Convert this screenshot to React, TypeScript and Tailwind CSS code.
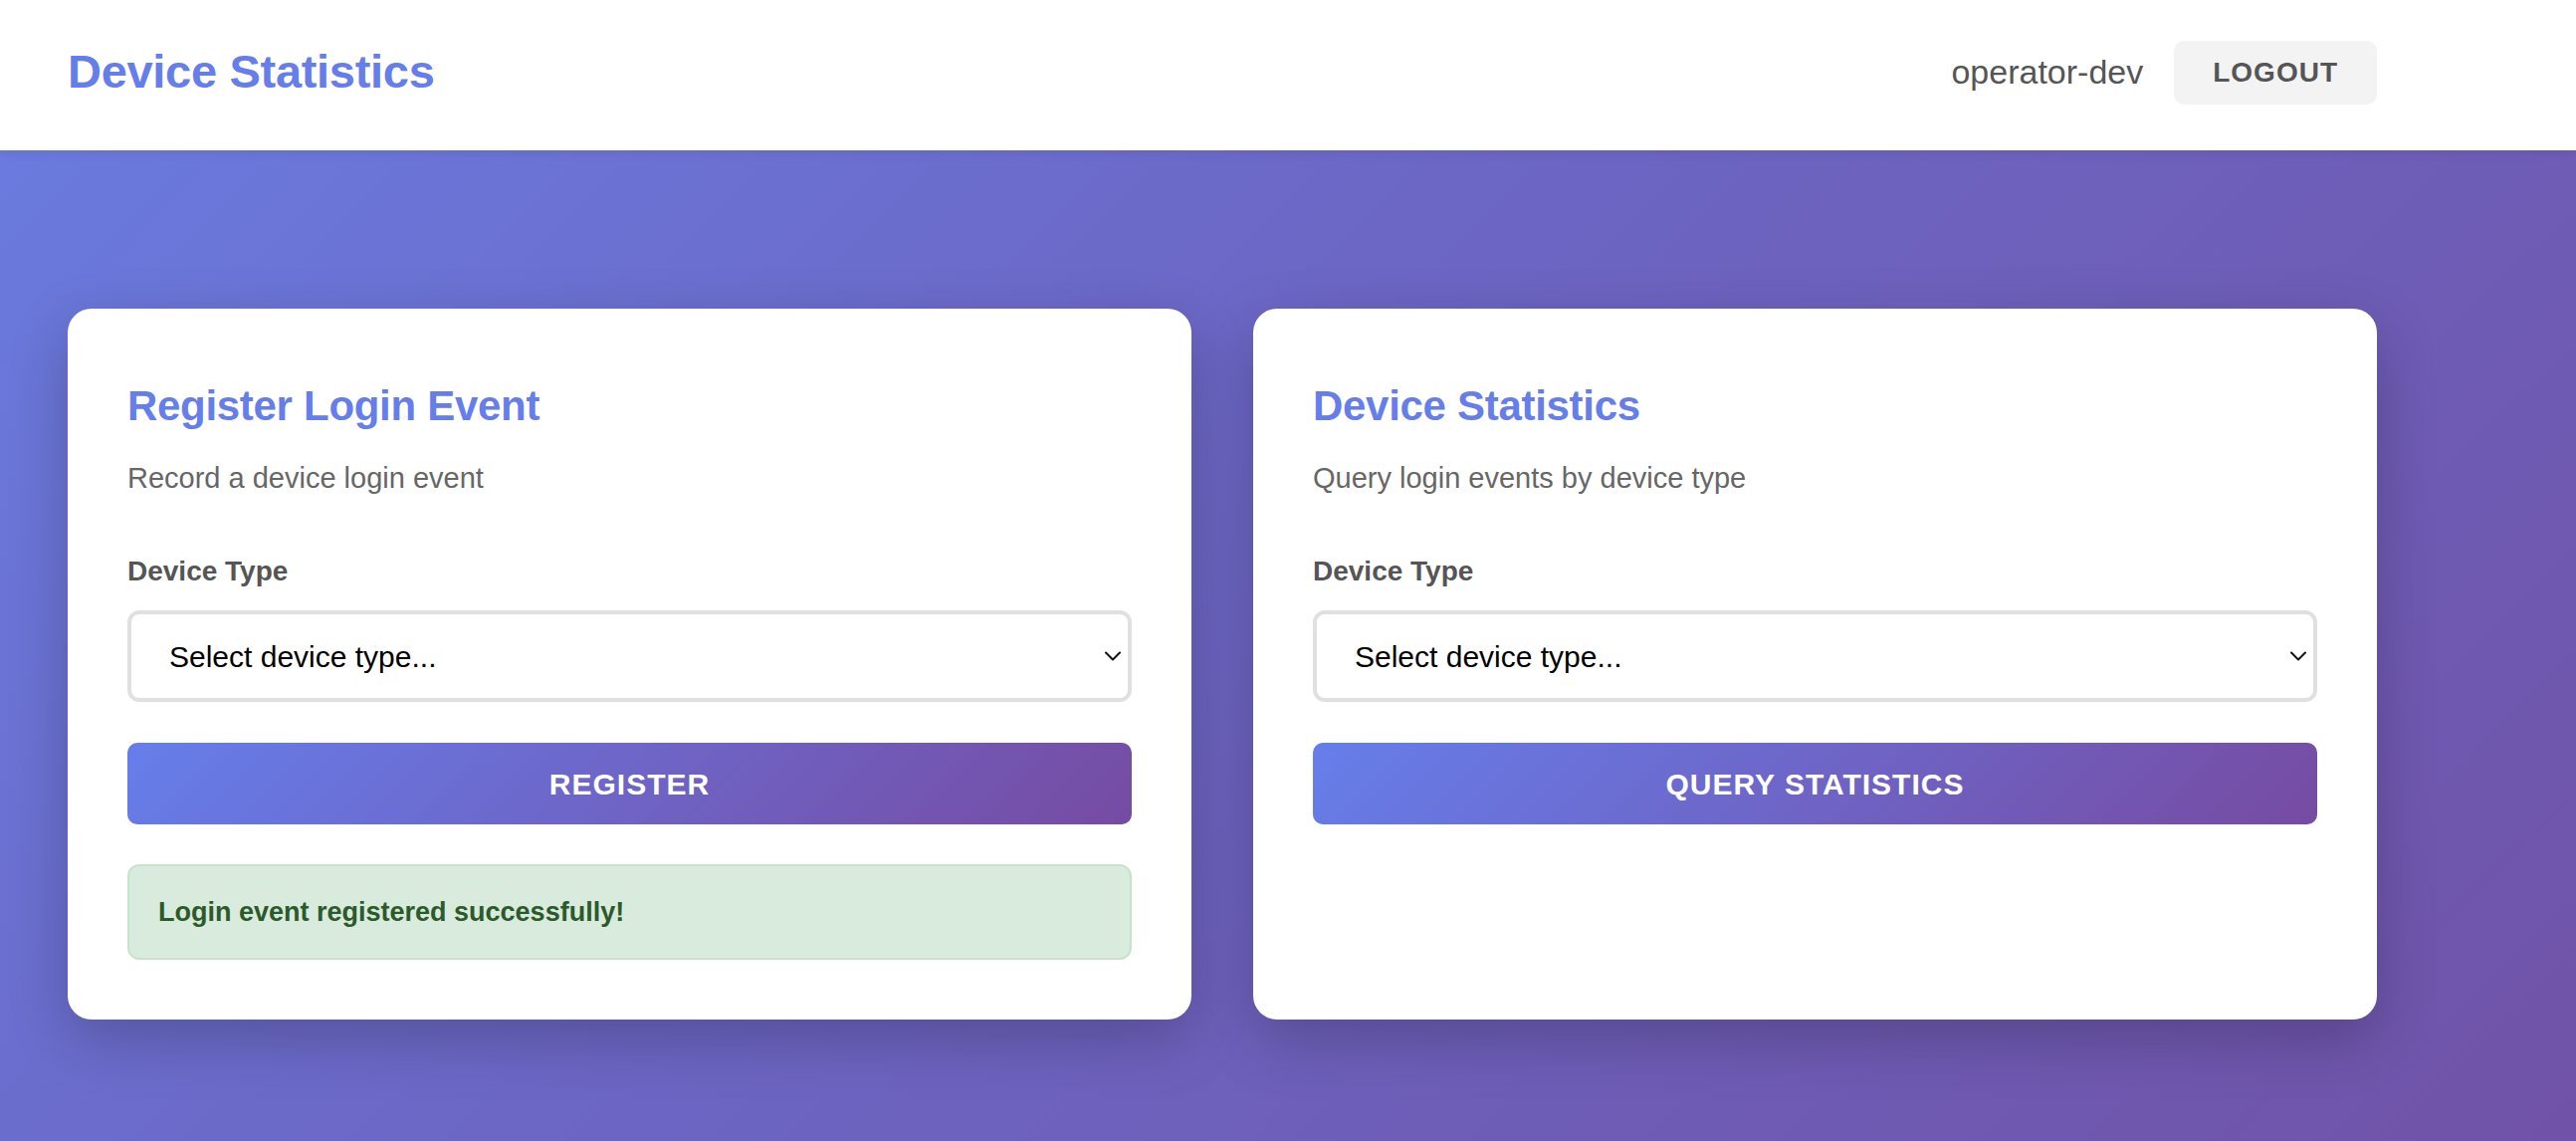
import React, { useState } from 'react';

const DEVICE_TYPES = ['iOS', 'Android', 'Web', 'Desktop'];

const font = { fontFamily: '"Liberation Sans", Arial, sans-serif' };

const DeviceSelect: React.FC<{ value: string; onChange: (v: string) => void }> = ({ value, onChange }) => (
  <div className="relative mt-[21px]">
    <select
      value={value}
      onChange={e => onChange(e.target.value)}
      className="h-[92px] w-full appearance-none rounded-[12px] border-[4px] border-[#e0e0e0] bg-white pl-[38px] pr-[50px] text-[30px] text-black outline-none"
    >
      <option value="">Select device type...</option>
      {DEVICE_TYPES.map(d => (
        <option key={d} value={d}>{d}</option>
      ))}
    </select>
    <svg
      className="pointer-events-none absolute right-[11px] top-1/2 -translate-y-1/2"
      width="16"
      height="10"
      viewBox="0 0 16 10"
      fill="none"
    >
      <path d="M1 1.5l7 7 7-7" stroke="#111" strokeWidth="2" strokeLinecap="round" strokeLinejoin="round" />
    </svg>
  </div>
);

const Card: React.FC<{ title: string; subtitle: string; children: React.ReactNode }> = ({ title, subtitle, children }) => (
  <div className="rounded-[24px] bg-white px-[60px] pb-[60px] pt-[72px] shadow-[0_20px_60px_rgba(0,0,0,0.22)]">
    <h2 className="text-[42px] font-bold leading-[52px] tracking-[-0.3px] text-[#667eea]">{title}</h2>
    <p className="mt-[26px] text-[29px] leading-[40px] text-[#666]">{subtitle}</p>
    <label className="mt-[56px] block text-[28px] font-semibold leading-[36px] text-[#555]">Device Type</label>
    {children}
  </div>
);

const GradientButton: React.FC<{ label: string; onClick: () => void }> = ({ label, onClick }) => (
  <button
    onClick={onClick}
    className="mt-[41px] h-[82px] w-full rounded-[10px] bg-[linear-gradient(135deg,#667eea_0%,#764ba2_100%)] text-[30px] font-bold tracking-[1px] text-white"
  >
    {label}
  </button>
);

export default function App() {
  const [registerType, setRegisterType] = useState('');
  const [queryType, setQueryType] = useState('');
  const [message, setMessage] = useState('Login event registered successfully!');

  return (
    <div style={font} className="min-h-screen bg-[linear-gradient(135deg,#6a7ce0_0%,#6c66c4_45%,#7053a8_100%)]">
      <header className="bg-white shadow-[0_2px_10px_rgba(0,0,0,0.08)]">
        <div className="flex h-[151px] max-w-[2456px] items-center justify-between px-[68px] pb-[6px]">
          <h1 className="text-[47px] font-bold tracking-[-0.3px] text-[#667eea]">Device Statistics</h1>
          <div className="flex items-center gap-[31px]">
            <span className="text-[34px] text-[#555]">operator-dev</span>
            <button className="h-[64px] rounded-[10px] bg-[#f3f3f3] px-[39px] text-[28px] font-bold tracking-[1px] text-[#555]">
              LOGOUT
            </button>
          </div>
        </div>
      </header>

      <main className="max-w-[2456px] px-[68px] pb-[80px] pt-[159px]">
        <div className="grid grid-cols-2 gap-[62px]">
          <Card title="Register Login Event" subtitle="Record a device login event">
            <DeviceSelect value={registerType} onChange={setRegisterType} />
            <GradientButton label="REGISTER" onClick={() => setMessage('Login event registered successfully!')} />
            {message && (
              <div className="mt-[40px] flex h-[96px] items-center rounded-[12px] border-2 border-[#c8e3cc] bg-[#d9ebdc] px-[29px] text-[27px] font-semibold text-[#2b5a2b]">
                {message}
              </div>
            )}
          </Card>
          <Card title="Device Statistics" subtitle="Query login events by device type">
            <DeviceSelect value={queryType} onChange={setQueryType} />
            <GradientButton label="QUERY STATISTICS" onClick={() => {}} />
          </Card>
        </div>
      </main>
    </div>
  );
}
